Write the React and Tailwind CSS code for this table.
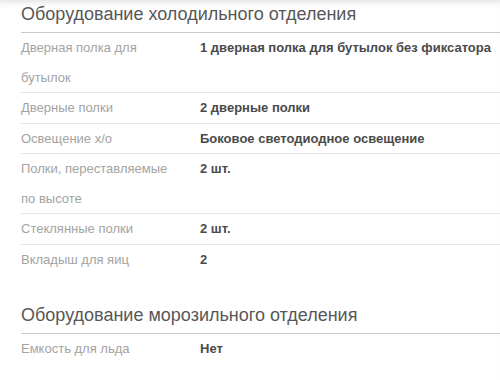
const sections = [
  {
    title: "Оборудование холодильного отделения",
    rows: [
      ["Дверная полка для бутылок", "1 дверная полка для бутылок без фиксатора"],
      ["Дверные полки", "2 дверные полки"],
      ["Освещение х/о", "Боковое светодиодное освещение"],
      ["Полки, переставляемые по высоте", "2 шт."],
      ["Стеклянные полки", "2 шт."],
      ["Вкладыш для яиц", "2"],
    ],
  },
  {
    title: "Оборудование морозильного отделения",
    rows: [["Емкость для льда", "Нет"]],
  },
]

function SpecSection({ title, rows }) {
  return (
    <section>
      <h3 className="pt-[2px] pb-[6px] text-[18px] leading-[24px] text-[#575757] border-b border-[#c8c8c8]">
        {title}
      </h3>
      <div>
        {rows.map(([label, value], i) => (
          <div
            key={label}
            className={
              "flex text-[13px] leading-[29.5px] " +
              (i < rows.length - 1 ? "border-b border-[#e6e6e6]" : "")
            }
          >
            <div className="w-[179px] shrink-0 pr-5 text-[#a3a3a3]">{label}</div>
            <div className="font-bold text-[#4a4a4a] whitespace-nowrap">{value}</div>
          </div>
        ))}
      </div>
    </section>
  )
}

export default function App() {
  return (
    <main
      className="w-[500px] h-[380px] overflow-hidden bg-white pl-[21px] shadow-[inset_0_7px_7px_-5px_rgba(0,0,0,0.12)]"
      style={{ fontFamily: '"Liberation Sans", Arial, sans-serif' }}
    >
      <div className="flex flex-col gap-[27px]">
        {sections.map(s => (
          <SpecSection key={s.title} title={s.title} rows={s.rows} />
        ))}
      </div>
    </main>
  )
}
